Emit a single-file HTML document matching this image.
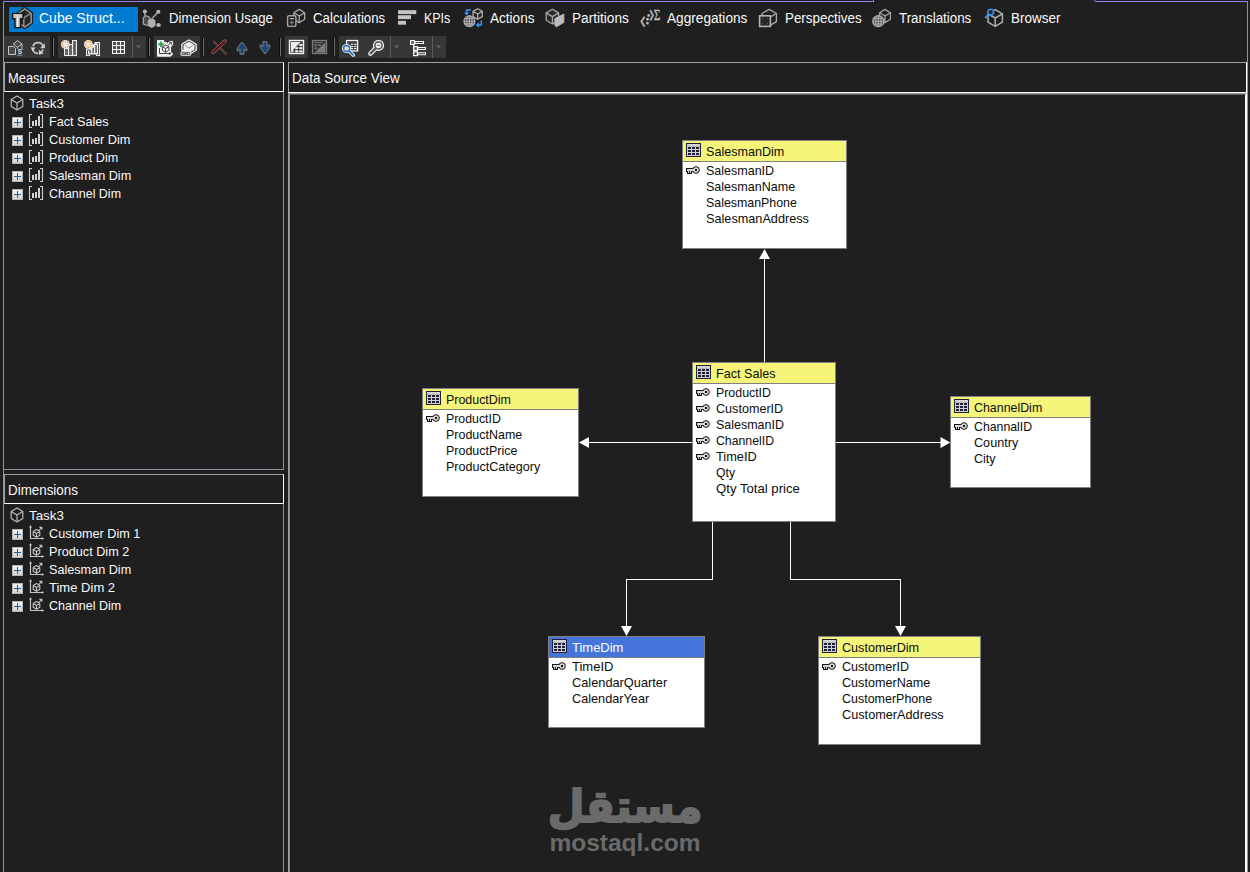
<!DOCTYPE html>
<html><head><meta charset="utf-8"><title>Cube Designer</title>
<style>
*{box-sizing:border-box;margin:0;padding:0}
html,body{width:1250px;height:872px;overflow:hidden;background:#1f1f1f}
body{position:relative;font-family:"Liberation Sans",sans-serif;font-size:13px;color:#fff}
.abs{position:absolute}
svg{display:block;overflow:visible}
.x{position:absolute;white-space:nowrap;line-height:16px;height:16px;transform-origin:0 50%}
.tbl{position:absolute;background:#fff;border:1px solid #808080}
.tbl .h{position:absolute;left:0;top:0;right:0;height:21px;border-bottom:1px solid #808080}
.g{position:absolute;top:36px;height:22px;background:#373737}
.sep{position:absolute;top:38px;width:2px;height:18px;border-right:1px solid #6e6e6e;border-left:1px dotted #000}
.dv{position:absolute;top:36px;width:1px;height:22px;background:#5c5c5c}
.pm{position:absolute;left:12px;width:11px;height:11px;border:1px solid #b4b4b4;background:linear-gradient(#f4f4f4,#d4d4d4)}
.pm:before{content:"";position:absolute;left:1px;top:4px;width:7px;height:1px;background:#1f5fa8}
.pm:after{content:"";position:absolute;left:4px;top:1px;width:1px;height:7px;background:#1f5fa8}
</style></head><body>

<div class="abs" style="left:3px;top:1px;width:871px;height:1px;background:#9282ee"></div>
<div class="abs" style="left:873px;top:0;width:1px;height:1px;background:#9282ee"></div><div class="abs" style="left:1094px;top:0;width:1px;height:1px;background:#9282ee"></div>
<div class="abs" style="left:1095px;top:1px;width:153px;height:1px;background:#9282ee"></div>
<div class="abs" style="left:3px;top:1px;width:1px;height:871px;background:#9282ee"></div>
<div class="abs" style="left:1247px;top:1px;width:1px;height:871px;background:#9282ee"></div>
<div class="abs" style="left:9px;top:7px;width:129px;height:25px;background:#007bd0;border-radius:1px"></div>

<svg class="abs" style="left:0;top:0" width="1250" height="34"><path d="M24.80 8.60 L31.30 13.30 L31.30 22.70 L24.80 27.40 L18.30 22.70 L18.30 13.30Z" fill="#262626" stroke="#14100e" stroke-width="3.2" stroke-linejoin="round" /><path d="M24.80 8.80 L31.20 13.40 L31.20 22.60 L24.80 27.20 L18.40 22.60 L18.40 13.40Z" fill="#262626" stroke="#969696" stroke-width="1.5" stroke-linejoin="round" /><path d="M18.6 13.6L23.8 17.8L31 13.4M23.8 17.8V27" fill="none" stroke="#868686" stroke-width="1.6"/><path d="M12.6 13.6H23V18.8H20.6V27.6H15V18.8H12.6Z" fill="#bebebe" stroke="#15100e" stroke-width="1.4" stroke-linejoin="round"/><path d="M17.6 15V26.4" stroke="#f0f0f0" stroke-width="1.1" fill="none"/><path d="M13.6 14.8H22" stroke="#dedede" stroke-width="1" fill="none"/><circle cx="144.9" cy="11.5" r="2.1" fill="#b4b4b4"/><circle cx="158.3" cy="11.8" r="2.1" fill="#b4b4b4"/><ellipse cx="158.5" cy="25" rx="2.4" ry="1.9" fill="#b4b4b4"/><path d="M144.9 12V16.5M157.3 12.8L152.3 18.2" stroke="#a8a8a8" stroke-width="1.4" fill="none"/><path d="M143.3 17.5L146.5 15.8L150 17.5V24L146.5 25.5L143.3 24Z" fill="#4a4a4a" stroke="#a8a8a8" stroke-width="1.2" stroke-linejoin="round"/><path d="M148.3 20.3L152 18.8L155 20.3V25.8L151.6 27.6L148.3 25.8Z" fill="#b0b0b0" stroke="#b8b8b8" stroke-width="0.8" stroke-linejoin="round"/><path d="M299.25 9.40 L304.65 12.70 L304.65 19.30 L299.25 22.60 L293.85 19.30 L293.85 12.70Z" fill="none" stroke="#a8a8a8" stroke-width="1.3" stroke-linejoin="round" /><path d="M293.85 12.70L299.25 16.00L304.65 12.70M299.25 16.00V22.60" fill="none" stroke="#a8a8a8" stroke-width="1.3" stroke-linejoin="round"/><rect x="287.6" y="15.8" width="8.3" height="10.6" rx="1.5" fill="#1f1f1f" stroke="#a8a8a8" stroke-width="1.4"/><path d="M289.8 18.6H293.8" stroke="#c8c8c8" stroke-width="1.2"/><path d="M289.6 22.6H294M291.8 20.6V24.8" stroke="#8a8a8a" stroke-width="1"/><rect x="398" y="10.2" width="18.3" height="3.9" fill="#c4c4c4"/><rect x="398" y="15.2" width="13" height="3.9" fill="#c4c4c4"/><rect x="398" y="20.8" width="8" height="3.9" fill="#c4c4c4"/><path d="M477.70 8.70 L482.30 11.35 L482.30 16.65 L477.70 19.30 L473.10 16.65 L473.10 11.35Z" fill="none" stroke="#b0b0b0" stroke-width="1.3" stroke-linejoin="round" /><path d="M473.10 11.35L477.70 14.00L482.30 11.35M477.70 14.00V19.30" fill="none" stroke="#b0b0b0" stroke-width="1.3" stroke-linejoin="round"/><circle cx="469.4" cy="21.2" r="5.4" fill="#4a4a4a" stroke="#b0b0b0" stroke-width="1.3"/><path d="M464.0 21.2H474.79999999999995M469.4 15.799999999999999V26.6M465.08 18.50H473.72M465.08 23.90H473.72" stroke="#b0b0b0" stroke-width="1.1" fill="none"/><ellipse cx="469.4" cy="21.2" rx="2.70" ry="5.4" fill="none" stroke="#b0b0b0" stroke-width="1"/><path d="M470.8 10H466.6V13.2" fill="none" stroke="#3a96f0" stroke-width="1.5"/><path d="M463.9 12.6H469.3L466.6 15.6Z" fill="#3a96f0"/><path d="M481.4 20.6V25H478.4" fill="none" stroke="#3a96f0" stroke-width="1.5"/><path d="M479 22.2V27.8L475.8 25Z" fill="#3a96f0"/><path d="M552.40 9.20 L558.60 12.90 L558.60 20.30 L552.40 24.00 L546.20 20.30 L546.20 12.90Z" fill="#2a2a2a" stroke="#a8a8a8" stroke-width="1.3" stroke-linejoin="round" /><path d="M546.20 12.90L552.40 16.60L558.60 12.90M552.40 16.60V24.00" fill="none" stroke="#a8a8a8" stroke-width="1.3" stroke-linejoin="round"/><path d="M554.8 18.6L563.9 14V22.4L556.6 26.8L554.8 25.6Z" fill="#bcbcbc" stroke="#bcbcbc" stroke-width="0.8" stroke-linejoin="round"/><path d="M644.6 16.6Q641.4 21.6 641.4 21.6Q641.4 21.6 644.6 26.6" fill="none" stroke="#a8a8a8" stroke-width="2"/><rect x="647.4" y="14.2" width="2.5" height="2.5" fill="#b8b8b8"/><rect x="646.2" y="18" width="2.5" height="2.5" fill="#b8b8b8"/><rect x="646.2" y="21.9" width="2.5" height="2.5" fill="#b8b8b8"/><path d="M650.2 10.2L653 15.3L650.2 20.4" fill="none" stroke="#a8a8a8" stroke-width="2"/><g opacity="0.99"><text x="653.8" y="19.7" font-family="Liberation Serif,serif" font-size="15.6" fill="#c4c4c4" stroke="#c4c4c4" stroke-width="0.35" textLength="6.6" lengthAdjust="spacingAndGlyphs">&#931;</text></g><path d="M769.20 9.40 L776.40 13.50 L776.40 21.70 L769.20 25.80 L762.00 21.70 L762.00 13.50Z" fill="none" stroke="#a8a8a8" stroke-width="1.4" stroke-linejoin="round" /><path d="M769.2 17.6L776.4 13.5" stroke="#a8a8a8" stroke-width="1.3"/><rect x="759.6" y="15.8" width="10.8" height="10.6" fill="#262626" stroke="#b4b4b4" stroke-width="1.6"/><path d="M762.2 18.4L767.8 23.8M767.8 18.4L762.2 23.8" stroke="#6a6a6a" stroke-width="1" stroke-dasharray="1.2 5.4"/><path d="M885.00 9.40 L890.40 12.70 L890.40 19.30 L885.00 22.60 L879.60 19.30 L879.60 12.70Z" fill="none" stroke="#a8a8a8" stroke-width="1.3" stroke-linejoin="round" /><path d="M879.60 12.70L885.00 16.00L890.40 12.70M885.00 16.00V22.60" fill="none" stroke="#a8a8a8" stroke-width="1.3" stroke-linejoin="round"/><circle cx="878.3" cy="21.2" r="5.5" fill="#4a4a4a" stroke="#b0b0b0" stroke-width="1.3"/><path d="M872.8 21.2H883.8M878.3 15.7V26.7M873.90 18.45H882.70M873.90 23.95H882.70" stroke="#b0b0b0" stroke-width="1.1" fill="none"/><ellipse cx="878.3" cy="21.2" rx="2.75" ry="5.5" fill="none" stroke="#b0b0b0" stroke-width="1"/><path d="M995.20 9.60 L1002.40 13.80 L1002.40 22.20 L995.20 26.40 L988.00 22.20 L988.00 13.80Z" fill="none" stroke="#b0b0b0" stroke-width="1.5" stroke-linejoin="round" /><path d="M988.00 13.80L995.20 18.00L1002.40 13.80M995.20 18.00V26.40" fill="none" stroke="#b0b0b0" stroke-width="1.5" stroke-linejoin="round"/><circle cx="990.7" cy="12.2" r="2.9" fill="#2a2a2a" stroke="#3a8ee8" stroke-width="1.5"/><path d="M988.8 14.4L985.6 17.4" stroke="#3a8ee8" stroke-width="2" stroke-linecap="round"/></svg>

<div class="g" style="left:4px;width:46px"></div>
<div class="sep" style="left:52px"></div>
<div class="g" style="left:58px;width:88px"></div><div class="dv" style="left:132px"></div>
<div class="sep" style="left:148px"></div>
<div class="g" style="left:154px;width:46px"></div>
<div class="sep" style="left:202px"></div>
<div class="sep" style="left:279px"></div>
<div class="g" style="left:285px;width:23px"></div>
<div class="sep" style="left:333px"></div>
<div class="g" style="left:339px;width:107px"></div><div class="dv" style="left:390px"></div><div class="dv" style="left:432px"></div>
<svg class="abs" style="left:0;top:0" width="1250" height="62"><path d="M8.5 46.5H13.5L15.5 48.5V54.5H8.5Z" fill="#4a4a4a" stroke="#c8c8c8" stroke-width="1"/><path d="M13.2 44L17.6 40.6L22 44L17.6 47.4Z" fill="#4a4a4a" stroke="#c8c8c8" stroke-width="1"/><path d="M22 44V50M17.6 47.4V49" stroke="#c8c8c8" stroke-width="1" fill="none"/><text x="17.8" y="53.6" font-family="Liberation Sans,sans-serif" font-size="6.4" font-weight="bold" fill="#e4e4e4">S</text><path d="M17 55.3H22" stroke="#a0a0a0" stroke-width="0.8"/><path d="M33 46.2A5.4 5.4 0 0 1 43.2 46.4" fill="none" stroke="#c4c4c4" stroke-width="1.8"/><path d="M44.8 43.2V48.2H40Z" fill="#d0d0d0"/><path d="M32.6 48.6A5.4 5.4 0 0 0 38.2 53.4" fill="none" stroke="#c4c4c4" stroke-width="1.8"/><path d="M30.6 47.2L35.6 47.6L32.6 51.4Z" fill="#d0d0d0"/><path d="M43.2 49.4L40.6 53.6" stroke="#c4c4c4" stroke-width="1.6"/><path d="M38.8 49.8L43.8 53.2L39 54.8Z" fill="#d0d0d0"/><rect x="64.5" y="48.5" width="4" height="7" fill="#686868" stroke="#f2f2f2"/><rect x="68.5" y="44.5" width="4" height="11" fill="#686868" stroke="#f2f2f2"/><rect x="72.5" y="40.5" width="4" height="15" fill="#686868" stroke="#f2f2f2"/><circle cx="65.4" cy="44.4" r="4.4" fill="#ececec"/><circle cx="68.40" cy="44.40" r="0.75" fill="#f09a20"/><circle cx="67.52" cy="46.52" r="0.75" fill="#f09a20"/><circle cx="65.40" cy="47.40" r="0.75" fill="#f09a20"/><circle cx="63.28" cy="46.52" r="0.75" fill="#f09a20"/><circle cx="62.40" cy="44.40" r="0.75" fill="#f09a20"/><circle cx="63.28" cy="42.28" r="0.75" fill="#f09a20"/><circle cx="65.40" cy="41.40" r="0.75" fill="#f09a20"/><circle cx="67.52" cy="42.28" r="0.75" fill="#f09a20"/><path d="M86 48.4H88.4V47H91.4V44.2H94.4V42H100V56H96V54.4H90V56H86Z" fill="#f2f2f2"/><path d="M89.2 50H87.5V54.7H89.2M96.8 43.5H98.6V54.7H96.8" fill="none" stroke="#3c3c3c" stroke-width="0.9"/><rect x="89.3" y="49.6" width="1.7" height="3.5" fill="#646464"/><rect x="92.3" y="47.6" width="1.7" height="5.5" fill="#646464"/><rect x="95.2" y="45" width="1.7" height="8.1" fill="#646464"/><circle cx="88.4" cy="44.4" r="4.4" fill="#ececec"/><circle cx="91.40" cy="44.40" r="0.75" fill="#f09a20"/><circle cx="90.52" cy="46.52" r="0.75" fill="#f09a20"/><circle cx="88.40" cy="47.40" r="0.75" fill="#f09a20"/><circle cx="86.28" cy="46.52" r="0.75" fill="#f09a20"/><circle cx="85.40" cy="44.40" r="0.75" fill="#f09a20"/><circle cx="86.28" cy="42.28" r="0.75" fill="#f09a20"/><circle cx="88.40" cy="41.40" r="0.75" fill="#f09a20"/><circle cx="90.52" cy="42.28" r="0.75" fill="#f09a20"/><rect x="112" y="41" width="13" height="13" fill="#f6f6f6"/><rect x="113" y="42" width="3" height="3" fill="#505050"/><rect x="117" y="42" width="3" height="3" fill="#505050"/><rect x="121" y="42" width="3" height="3" fill="#505050"/><rect x="113" y="46" width="3" height="3" fill="#505050"/><rect x="117" y="46" width="3" height="3" fill="#505050"/><rect x="121" y="46" width="3" height="3" fill="#505050"/><rect x="113" y="50" width="3" height="3" fill="#505050"/><rect x="117" y="50" width="3" height="3" fill="#505050"/><rect x="121" y="50" width="3" height="3" fill="#505050"/><path d="M135.7 45.2H141.3L138.5 48.8Z" fill="#5e5e5e"/><path d="M393.7 45.2H399.3L396.5 48.8Z" fill="#5e5e5e"/><path d="M435.8 45.2H441.40000000000003L438.6 48.8Z" fill="#5e5e5e"/><path d="M157.5 40.5H163.8V42.4H166.5L167.6 43.6L169.6 41.4H172.6V45L170.6 46.8V52L172.8 54L170.6 56.2H157.5V47.6H157.5Z" fill="#f4f4f4" stroke="#f4f4f4" stroke-width="1" stroke-linejoin="round"/><path d="M159.5 48V53.5H170" fill="none" stroke="#404040" stroke-width="1"/><path d="M169.2 51.8L171.4 53.5L169.2 55.2Z" fill="#404040"/><path d="M165.60 45.00 L168.80 46.80 L168.80 50.40 L165.60 52.20 L162.40 50.40 L162.40 46.80Z" fill="none" stroke="#404040" stroke-width="1" stroke-linejoin="round" /><path d="M162.40 46.80L165.60 48.60L168.80 46.80M165.60 48.60V52.20" fill="none" stroke="#404040" stroke-width="1" stroke-linejoin="round"/><path d="M168.2 45.2L171 42.4M169 42.2H171.4V44.6" fill="none" stroke="#404040" stroke-width="1"/><path d="M160 41.4H162V43.2H163.9V45.2H162V47H160V45.2H158.1V43.2H160Z" fill="#35a853"/><path d="M189 39.8L196.3 44V50.4L190.6 53.8H184L181.8 50.4V44Z" fill="#f2f2f2" stroke="#f2f2f2" stroke-width="1" stroke-linejoin="round"/><path d="M189 41.2L195 44.7V49.9L189.8 52.9M183 49.8V44.7L189 41.2" fill="none" stroke="#3c3c3c" stroke-width="1"/><path d="M185.2 45.4L189 48.2L192.8 45.4" fill="none" stroke="#8a8a8a" stroke-width="1"/><rect x="180.4" y="51" width="10.8" height="5" rx="2.5" fill="#f2f2f2"/><rect x="181.7" y="52.3" width="8.2" height="2.4" rx="1.2" fill="none" stroke="#3c3c3c" stroke-width="1"/><path d="M184.4 53.5H187.2" stroke="#f2f2f2" stroke-width="1.6"/><path d="M183.6 53.5H188" stroke="#3c3c3c" stroke-width="0.8"/><path d="M213.6 41.4L226.4 54.4" stroke="#6e6e6e" stroke-width="1.9"/><path d="M213.6 41.4L226.4 54.4" stroke="#5e0608" stroke-width="0.9"/><path d="M224.8 41.2L213.2 52.2" stroke="#747474" stroke-width="3.6" stroke-linecap="round"/><path d="M224.6 41.4L213.3 52.1" stroke="#6c0608" stroke-width="2.1" stroke-linecap="round"/><path d="M242 42L246.8 48.4V51.2L244 49V54.2H240V49L237.2 51.2V48.4Z" fill="#1b4679" stroke="#808080" stroke-width="1" stroke-linejoin="round"/><path d="M265 54L269.8 47.4V44.6L267 46.8V41.7H263V46.8L260.2 44.6V47.4Z" fill="#1b4679" stroke="#808080" stroke-width="1" stroke-linejoin="round"/><rect x="289.5" y="40.5" width="14" height="13" fill="#404040" stroke="#f6f6f6" stroke-width="1.4"/><path d="M291 42H300.5L291 52Z" fill="#ececec"/><rect x="299.3" y="44" width="3" height="1.9" fill="#f6f6f6"/><rect x="295.2" y="47.2" width="3" height="1.9" fill="#f6f6f6"/><rect x="299.3" y="47.2" width="3" height="1.9" fill="#f6f6f6"/><rect x="295.2" y="50.3" width="3" height="1.9" fill="#f6f6f6"/><rect x="299.3" y="50.3" width="3" height="1.9" fill="#f6f6f6"/><rect x="291.4" y="50.3" width="2" height="1.9" fill="#f6f6f6"/><rect x="312.5" y="40.5" width="14" height="13" fill="#303030" stroke="#7a7a7a" stroke-width="1.3"/><path d="M325.4 42.2V52.4H314.6Z" fill="#7c7c7c"/><path d="M314 42.6H322.6" stroke="#7a7a7a" stroke-width="0.9"/><rect x="314.2" y="44.2" width="3" height="1.9" fill="#727272"/><rect x="318.2" y="44.2" width="2.6" height="1.9" fill="#727272"/><rect x="314.2" y="47.3" width="3" height="1.9" fill="#727272"/><rect x="346.6" y="40.5" width="11" height="10.4" fill="#404040" stroke="#f6f6f6" stroke-width="1.3"/><rect x="351" y="43.8" width="2.2" height="1.1" fill="#f6f6f6"/><rect x="354.2" y="43.8" width="2.2" height="1.1" fill="#f6f6f6"/><rect x="351" y="46" width="2.2" height="1.1" fill="#f6f6f6"/><rect x="354.2" y="46" width="2.2" height="1.1" fill="#f6f6f6"/><rect x="351" y="48" width="2.2" height="1.1" fill="#f6f6f6"/><rect x="354.2" y="48" width="2.2" height="1.1" fill="#f6f6f6"/><path d="M349.6 51.4L353.2 55" stroke="#f4f0e8" stroke-width="3.6" stroke-linecap="round"/><circle cx="346.6" cy="48.5" r="4.6" fill="#f4f0e8"/><path d="M349.4 51.2L353 54.8" stroke="#1f6fd0" stroke-width="1.8" stroke-linecap="round"/><circle cx="346.6" cy="48.5" r="3" fill="#e2e4e2" stroke="#1f6fd0" stroke-width="1.3"/><path d="M375 49L370.4 53.6" stroke="#f4f0f0" stroke-width="4.6" stroke-linecap="round"/><circle cx="378.5" cy="45.4" r="5.6" fill="#f4f0f0"/><path d="M375 49L370.6 53.4" stroke="#606060" stroke-width="2.6" stroke-linecap="round"/><circle cx="378.5" cy="45.4" r="4.4" fill="#606060"/><circle cx="378.5" cy="45.4" r="2.7" fill="#f6f2f2"/><path d="M377 45.4H380" stroke="#505050" stroke-width="0.9"/><rect x="410" y="40" width="5" height="5" fill="#f6f6f6"/><rect x="411.2" y="41.2" width="2.6" height="2.6" fill="#505050"/><rect x="415" y="41" width="9" height="3" fill="#f6f6f6"/><rect x="415.6" y="42" width="7.4" height="1" fill="#484848"/><rect x="413" y="46" width="5" height="5" fill="#f6f6f6"/><rect x="414.2" y="47.2" width="2.6" height="2.6" fill="#505050"/><rect x="418" y="47" width="8" height="3" fill="#f6f6f6"/><rect x="418.6" y="48" width="6.4" height="1" fill="#484848"/><rect x="413" y="51.2" width="5" height="5" fill="#f6f6f6"/><rect x="414.2" y="52.400000000000006" width="2.6" height="2.6" fill="#505050"/><rect x="418" y="52.2" width="8" height="3" fill="#f6f6f6"/><rect x="418.6" y="53.2" width="6.4" height="1" fill="#484848"/><path d="M413.6 45V51.5" stroke="#f6f6f6" stroke-width="1.2"/></svg>

<div class="abs" style="left:4px;top:62px;width:280px;height:30px;border:1px solid;border-color:#a0a0a0 #fff #fff #a0a0a0"></div>
<div class="abs" style="left:4px;top:92px;width:280px;height:378px;border:1px solid #8a8ca0;border-top:none;border-left:none"></div>
<div class="abs" style="left:4px;top:474px;width:280px;height:30px;border:1px solid;border-color:#a0a0a0 #fff #fff #a0a0a0"></div>
<div class="abs" style="left:283px;top:504px;width:1px;height:368px;background:#8a8ca0"></div>
<div class="abs" style="left:288px;top:62px;width:959px;height:31px;border:1px solid;border-color:#a0a0a0 #fff #fff #a0a0a0"></div>
<div class="abs" style="left:288px;top:93px;width:959px;height:779px;border:1px solid;border-color:#9c9c9c #fff #fff #a0a0a0;border-bottom:none"></div>
<div class="abs" style="left:289px;top:94px;width:957px;height:778px;border:1px solid;border-color:#5c5c5c #fff #fff #858585;border-bottom:none"></div>

<svg class="abs" style="left:0;top:0" width="60" height="872"><path d="M17.00 96.00 L22.80 99.50 L22.80 106.50 L17.00 110.00 L11.20 106.50 L11.20 99.50Z" fill="none" stroke="#bcbcbc" stroke-width="1.2" stroke-linejoin="round" /><path d="M11.20 99.50L17.00 103.00L22.80 99.50M17.00 103.00V110.00" fill="none" stroke="#bcbcbc" stroke-width="1.2" stroke-linejoin="round"/><path d="M17.00 508.00 L22.80 511.50 L22.80 518.50 L17.00 522.00 L11.20 518.50 L11.20 511.50Z" fill="none" stroke="#bcbcbc" stroke-width="1.2" stroke-linejoin="round" /><path d="M11.20 511.50L17.00 515.00L22.80 511.50M17.00 515.00V522.00" fill="none" stroke="#bcbcbc" stroke-width="1.2" stroke-linejoin="round"/><path d="M32 114.5H29.5V127.5H32M40 114.5H42.5V127.5H40" fill="none" stroke="#d0d0d0" stroke-width="1.1"/><rect x="32" y="121" width="2" height="5" fill="#d4d4d4"/><rect x="35" y="120" width="2" height="6" fill="#d4d4d4"/><rect x="38" y="116" width="2" height="10" fill="#d4d4d4"/><path d="M30.5 527V538.5H42.5" fill="none" stroke="#c4c4c4" stroke-width="1.2"/><path d="M30.5 525L32 527.4H29Z M44.2 538.5L41.8 540V537Z" fill="#c4c4c4"/><path d="M39 530.4L41.2 528M39.4 527.4H41.8V529.8" fill="none" stroke="#c4c4c4" stroke-width="1.1"/><path d="M36.50 529.60 L39.80 531.50 L39.80 535.30 L36.50 537.20 L33.20 535.30 L33.20 531.50Z" fill="none" stroke="#c4c4c4" stroke-width="1.1" stroke-linejoin="round" /><path d="M33.20 531.50L36.50 533.40L39.80 531.50M36.50 533.40V537.20" fill="none" stroke="#c4c4c4" stroke-width="1.1" stroke-linejoin="round"/><path d="M32 132.5H29.5V145.5H32M40 132.5H42.5V145.5H40" fill="none" stroke="#d0d0d0" stroke-width="1.1"/><rect x="32" y="139" width="2" height="5" fill="#d4d4d4"/><rect x="35" y="138" width="2" height="6" fill="#d4d4d4"/><rect x="38" y="134" width="2" height="10" fill="#d4d4d4"/><path d="M30.5 545V556.5H42.5" fill="none" stroke="#c4c4c4" stroke-width="1.2"/><path d="M30.5 543L32 545.4H29Z M44.2 556.5L41.8 558V555Z" fill="#c4c4c4"/><path d="M39 548.4L41.2 546M39.4 545.4H41.8V547.8" fill="none" stroke="#c4c4c4" stroke-width="1.1"/><path d="M36.50 547.60 L39.80 549.50 L39.80 553.30 L36.50 555.20 L33.20 553.30 L33.20 549.50Z" fill="none" stroke="#c4c4c4" stroke-width="1.1" stroke-linejoin="round" /><path d="M33.20 549.50L36.50 551.40L39.80 549.50M36.50 551.40V555.20" fill="none" stroke="#c4c4c4" stroke-width="1.1" stroke-linejoin="round"/><path d="M32 150.5H29.5V163.5H32M40 150.5H42.5V163.5H40" fill="none" stroke="#d0d0d0" stroke-width="1.1"/><rect x="32" y="157" width="2" height="5" fill="#d4d4d4"/><rect x="35" y="156" width="2" height="6" fill="#d4d4d4"/><rect x="38" y="152" width="2" height="10" fill="#d4d4d4"/><path d="M30.5 563V574.5H42.5" fill="none" stroke="#c4c4c4" stroke-width="1.2"/><path d="M30.5 561L32 563.4H29Z M44.2 574.5L41.8 576V573Z" fill="#c4c4c4"/><path d="M39 566.4L41.2 564M39.4 563.4H41.8V565.8" fill="none" stroke="#c4c4c4" stroke-width="1.1"/><path d="M36.50 565.60 L39.80 567.50 L39.80 571.30 L36.50 573.20 L33.20 571.30 L33.20 567.50Z" fill="none" stroke="#c4c4c4" stroke-width="1.1" stroke-linejoin="round" /><path d="M33.20 567.50L36.50 569.40L39.80 567.50M36.50 569.40V573.20" fill="none" stroke="#c4c4c4" stroke-width="1.1" stroke-linejoin="round"/><path d="M32 168.5H29.5V181.5H32M40 168.5H42.5V181.5H40" fill="none" stroke="#d0d0d0" stroke-width="1.1"/><rect x="32" y="175" width="2" height="5" fill="#d4d4d4"/><rect x="35" y="174" width="2" height="6" fill="#d4d4d4"/><rect x="38" y="170" width="2" height="10" fill="#d4d4d4"/><path d="M30.5 581V592.5H42.5" fill="none" stroke="#c4c4c4" stroke-width="1.2"/><path d="M30.5 579L32 581.4H29Z M44.2 592.5L41.8 594V591Z" fill="#c4c4c4"/><path d="M39 584.4L41.2 582M39.4 581.4H41.8V583.8" fill="none" stroke="#c4c4c4" stroke-width="1.1"/><path d="M36.50 583.60 L39.80 585.50 L39.80 589.30 L36.50 591.20 L33.20 589.30 L33.20 585.50Z" fill="none" stroke="#c4c4c4" stroke-width="1.1" stroke-linejoin="round" /><path d="M33.20 585.50L36.50 587.40L39.80 585.50M36.50 587.40V591.20" fill="none" stroke="#c4c4c4" stroke-width="1.1" stroke-linejoin="round"/><path d="M32 186.5H29.5V199.5H32M40 186.5H42.5V199.5H40" fill="none" stroke="#d0d0d0" stroke-width="1.1"/><rect x="32" y="193" width="2" height="5" fill="#d4d4d4"/><rect x="35" y="192" width="2" height="6" fill="#d4d4d4"/><rect x="38" y="188" width="2" height="10" fill="#d4d4d4"/><path d="M30.5 599V610.5H42.5" fill="none" stroke="#c4c4c4" stroke-width="1.2"/><path d="M30.5 597L32 599.4H29Z M44.2 610.5L41.8 612V609Z" fill="#c4c4c4"/><path d="M39 602.4L41.2 600M39.4 599.4H41.8V601.8" fill="none" stroke="#c4c4c4" stroke-width="1.1"/><path d="M36.50 601.60 L39.80 603.50 L39.80 607.30 L36.50 609.20 L33.20 607.30 L33.20 603.50Z" fill="none" stroke="#c4c4c4" stroke-width="1.1" stroke-linejoin="round" /><path d="M33.20 603.50L36.50 605.40L39.80 603.50M36.50 605.40V609.20" fill="none" stroke="#c4c4c4" stroke-width="1.1" stroke-linejoin="round"/></svg><div class="pm" style="top:117px"></div><div class="pm" style="top:529px"></div><div class="pm" style="top:135px"></div><div class="pm" style="top:547px"></div><div class="pm" style="top:153px"></div><div class="pm" style="top:565px"></div><div class="pm" style="top:171px"></div><div class="pm" style="top:583px"></div><div class="pm" style="top:189px"></div><div class="pm" style="top:601px"></div>
<div class="tbl" style="left:682px;top:140px;width:165px;height:109px"><div class="h" style="background:#f5f57a"></div><svg class="abs" style="left:0;top:0" width="22" height="20"><rect x="3.5" y="2.5" width="14" height="13" fill="#d2d2d2" stroke="#20203a" stroke-width="1"/><path d="M4 5.5H17" stroke="#b8b8b8" stroke-width="1"/><rect x="5" y="6" width="3" height="2" fill="#20203a"/><rect x="9" y="6" width="3" height="2" fill="#20203a"/><rect x="13" y="6" width="3" height="2" fill="#20203a"/><rect x="5" y="9" width="3" height="2" fill="#20203a"/><rect x="9" y="9" width="3" height="2" fill="#20203a"/><rect x="13" y="9" width="3" height="2" fill="#20203a"/><rect x="5" y="12" width="3" height="2" fill="#20203a"/><rect x="9" y="12" width="3" height="2" fill="#20203a"/><rect x="13" y="12" width="3" height="2" fill="#20203a"/></svg>
<div class="abs" style="left:3px;top:24px"><svg width="16" height="11"><g shape-rendering="crispEdges"><rect x="0" y="3" width="7.5" height="4" fill="#161616"/><rect x="1" y="6" width="5" height="3" fill="#161616"/></g><circle cx="10" cy="5" r="3.35" fill="#d4d6d4" stroke="#161616" stroke-width="1"/><rect x="9" y="4" width="2" height="2" fill="#101010"/><g shape-rendering="crispEdges"><rect x="1" y="4" width="7" height="2" fill="#d6d6d6"/><rect x="2" y="6" width="1" height="2" fill="#d6d6d6"/><rect x="4" y="6" width="1" height="2" fill="#d6d6d6"/></g></svg></div>
</div>
<div class="tbl" style="left:692px;top:362px;width:144px;height:160px"><div class="h" style="background:#f5f57a"></div><svg class="abs" style="left:0;top:0" width="22" height="20"><rect x="3.5" y="2.5" width="14" height="13" fill="#d2d2d2" stroke="#20203a" stroke-width="1"/><path d="M4 5.5H17" stroke="#b8b8b8" stroke-width="1"/><rect x="5" y="6" width="3" height="2" fill="#20203a"/><rect x="9" y="6" width="3" height="2" fill="#20203a"/><rect x="13" y="6" width="3" height="2" fill="#20203a"/><rect x="5" y="9" width="3" height="2" fill="#20203a"/><rect x="9" y="9" width="3" height="2" fill="#20203a"/><rect x="13" y="9" width="3" height="2" fill="#20203a"/><rect x="5" y="12" width="3" height="2" fill="#20203a"/><rect x="9" y="12" width="3" height="2" fill="#20203a"/><rect x="13" y="12" width="3" height="2" fill="#20203a"/></svg>
<div class="abs" style="left:3px;top:24px"><svg width="16" height="11"><g shape-rendering="crispEdges"><rect x="0" y="3" width="7.5" height="4" fill="#161616"/><rect x="1" y="6" width="5" height="3" fill="#161616"/></g><circle cx="10" cy="5" r="3.35" fill="#d4d6d4" stroke="#161616" stroke-width="1"/><rect x="9" y="4" width="2" height="2" fill="#101010"/><g shape-rendering="crispEdges"><rect x="1" y="4" width="7" height="2" fill="#d6d6d6"/><rect x="2" y="6" width="1" height="2" fill="#d6d6d6"/><rect x="4" y="6" width="1" height="2" fill="#d6d6d6"/></g></svg></div>
<div class="abs" style="left:3px;top:40px"><svg width="16" height="11"><g shape-rendering="crispEdges"><rect x="0" y="3" width="7.5" height="4" fill="#161616"/><rect x="1" y="6" width="5" height="3" fill="#161616"/></g><circle cx="10" cy="5" r="3.35" fill="#d4d6d4" stroke="#161616" stroke-width="1"/><rect x="9" y="4" width="2" height="2" fill="#101010"/><g shape-rendering="crispEdges"><rect x="1" y="4" width="7" height="2" fill="#d6d6d6"/><rect x="2" y="6" width="1" height="2" fill="#d6d6d6"/><rect x="4" y="6" width="1" height="2" fill="#d6d6d6"/></g></svg></div>
<div class="abs" style="left:3px;top:56px"><svg width="16" height="11"><g shape-rendering="crispEdges"><rect x="0" y="3" width="7.5" height="4" fill="#161616"/><rect x="1" y="6" width="5" height="3" fill="#161616"/></g><circle cx="10" cy="5" r="3.35" fill="#d4d6d4" stroke="#161616" stroke-width="1"/><rect x="9" y="4" width="2" height="2" fill="#101010"/><g shape-rendering="crispEdges"><rect x="1" y="4" width="7" height="2" fill="#d6d6d6"/><rect x="2" y="6" width="1" height="2" fill="#d6d6d6"/><rect x="4" y="6" width="1" height="2" fill="#d6d6d6"/></g></svg></div>
<div class="abs" style="left:3px;top:72px"><svg width="16" height="11"><g shape-rendering="crispEdges"><rect x="0" y="3" width="7.5" height="4" fill="#161616"/><rect x="1" y="6" width="5" height="3" fill="#161616"/></g><circle cx="10" cy="5" r="3.35" fill="#d4d6d4" stroke="#161616" stroke-width="1"/><rect x="9" y="4" width="2" height="2" fill="#101010"/><g shape-rendering="crispEdges"><rect x="1" y="4" width="7" height="2" fill="#d6d6d6"/><rect x="2" y="6" width="1" height="2" fill="#d6d6d6"/><rect x="4" y="6" width="1" height="2" fill="#d6d6d6"/></g></svg></div>
<div class="abs" style="left:3px;top:88px"><svg width="16" height="11"><g shape-rendering="crispEdges"><rect x="0" y="3" width="7.5" height="4" fill="#161616"/><rect x="1" y="6" width="5" height="3" fill="#161616"/></g><circle cx="10" cy="5" r="3.35" fill="#d4d6d4" stroke="#161616" stroke-width="1"/><rect x="9" y="4" width="2" height="2" fill="#101010"/><g shape-rendering="crispEdges"><rect x="1" y="4" width="7" height="2" fill="#d6d6d6"/><rect x="2" y="6" width="1" height="2" fill="#d6d6d6"/><rect x="4" y="6" width="1" height="2" fill="#d6d6d6"/></g></svg></div>
</div>
<div class="tbl" style="left:422px;top:388px;width:157px;height:109px"><div class="h" style="background:#f5f57a"></div><svg class="abs" style="left:0;top:0" width="22" height="20"><rect x="3.5" y="2.5" width="14" height="13" fill="#d2d2d2" stroke="#20203a" stroke-width="1"/><path d="M4 5.5H17" stroke="#b8b8b8" stroke-width="1"/><rect x="5" y="6" width="3" height="2" fill="#20203a"/><rect x="9" y="6" width="3" height="2" fill="#20203a"/><rect x="13" y="6" width="3" height="2" fill="#20203a"/><rect x="5" y="9" width="3" height="2" fill="#20203a"/><rect x="9" y="9" width="3" height="2" fill="#20203a"/><rect x="13" y="9" width="3" height="2" fill="#20203a"/><rect x="5" y="12" width="3" height="2" fill="#20203a"/><rect x="9" y="12" width="3" height="2" fill="#20203a"/><rect x="13" y="12" width="3" height="2" fill="#20203a"/></svg>
<div class="abs" style="left:3px;top:24px"><svg width="16" height="11"><g shape-rendering="crispEdges"><rect x="0" y="3" width="7.5" height="4" fill="#161616"/><rect x="1" y="6" width="5" height="3" fill="#161616"/></g><circle cx="10" cy="5" r="3.35" fill="#d4d6d4" stroke="#161616" stroke-width="1"/><rect x="9" y="4" width="2" height="2" fill="#101010"/><g shape-rendering="crispEdges"><rect x="1" y="4" width="7" height="2" fill="#d6d6d6"/><rect x="2" y="6" width="1" height="2" fill="#d6d6d6"/><rect x="4" y="6" width="1" height="2" fill="#d6d6d6"/></g></svg></div>
</div>
<div class="tbl" style="left:950px;top:396px;width:141px;height:92px"><div class="h" style="background:#f5f57a"></div><svg class="abs" style="left:0;top:0" width="22" height="20"><rect x="3.5" y="2.5" width="14" height="13" fill="#d2d2d2" stroke="#20203a" stroke-width="1"/><path d="M4 5.5H17" stroke="#b8b8b8" stroke-width="1"/><rect x="5" y="6" width="3" height="2" fill="#20203a"/><rect x="9" y="6" width="3" height="2" fill="#20203a"/><rect x="13" y="6" width="3" height="2" fill="#20203a"/><rect x="5" y="9" width="3" height="2" fill="#20203a"/><rect x="9" y="9" width="3" height="2" fill="#20203a"/><rect x="13" y="9" width="3" height="2" fill="#20203a"/><rect x="5" y="12" width="3" height="2" fill="#20203a"/><rect x="9" y="12" width="3" height="2" fill="#20203a"/><rect x="13" y="12" width="3" height="2" fill="#20203a"/></svg>
<div class="abs" style="left:3px;top:24px"><svg width="16" height="11"><g shape-rendering="crispEdges"><rect x="0" y="3" width="7.5" height="4" fill="#161616"/><rect x="1" y="6" width="5" height="3" fill="#161616"/></g><circle cx="10" cy="5" r="3.35" fill="#d4d6d4" stroke="#161616" stroke-width="1"/><rect x="9" y="4" width="2" height="2" fill="#101010"/><g shape-rendering="crispEdges"><rect x="1" y="4" width="7" height="2" fill="#d6d6d6"/><rect x="2" y="6" width="1" height="2" fill="#d6d6d6"/><rect x="4" y="6" width="1" height="2" fill="#d6d6d6"/></g></svg></div>
</div>
<div class="tbl" style="left:548px;top:636px;width:157px;height:92px"><div class="h" style="background:#4475db"></div><svg class="abs" style="left:0;top:0" width="22" height="20"><rect x="3.5" y="2.5" width="14" height="13" fill="#d2d2d2" stroke="#20203a" stroke-width="1"/><path d="M4 5.5H17" stroke="#b8b8b8" stroke-width="1"/><rect x="5" y="6" width="3" height="2" fill="#20203a"/><rect x="9" y="6" width="3" height="2" fill="#20203a"/><rect x="13" y="6" width="3" height="2" fill="#20203a"/><rect x="5" y="9" width="3" height="2" fill="#20203a"/><rect x="9" y="9" width="3" height="2" fill="#20203a"/><rect x="13" y="9" width="3" height="2" fill="#20203a"/><rect x="5" y="12" width="3" height="2" fill="#20203a"/><rect x="9" y="12" width="3" height="2" fill="#20203a"/><rect x="13" y="12" width="3" height="2" fill="#20203a"/></svg>
<div class="abs" style="left:3px;top:24px"><svg width="16" height="11"><g shape-rendering="crispEdges"><rect x="0" y="3" width="7.5" height="4" fill="#161616"/><rect x="1" y="6" width="5" height="3" fill="#161616"/></g><circle cx="10" cy="5" r="3.35" fill="#d4d6d4" stroke="#161616" stroke-width="1"/><rect x="9" y="4" width="2" height="2" fill="#101010"/><g shape-rendering="crispEdges"><rect x="1" y="4" width="7" height="2" fill="#d6d6d6"/><rect x="2" y="6" width="1" height="2" fill="#d6d6d6"/><rect x="4" y="6" width="1" height="2" fill="#d6d6d6"/></g></svg></div>
</div>
<div class="tbl" style="left:818px;top:636px;width:163px;height:109px"><div class="h" style="background:#f5f57a"></div><svg class="abs" style="left:0;top:0" width="22" height="20"><rect x="3.5" y="2.5" width="14" height="13" fill="#d2d2d2" stroke="#20203a" stroke-width="1"/><path d="M4 5.5H17" stroke="#b8b8b8" stroke-width="1"/><rect x="5" y="6" width="3" height="2" fill="#20203a"/><rect x="9" y="6" width="3" height="2" fill="#20203a"/><rect x="13" y="6" width="3" height="2" fill="#20203a"/><rect x="5" y="9" width="3" height="2" fill="#20203a"/><rect x="9" y="9" width="3" height="2" fill="#20203a"/><rect x="13" y="9" width="3" height="2" fill="#20203a"/><rect x="5" y="12" width="3" height="2" fill="#20203a"/><rect x="9" y="12" width="3" height="2" fill="#20203a"/><rect x="13" y="12" width="3" height="2" fill="#20203a"/></svg>
<div class="abs" style="left:3px;top:24px"><svg width="16" height="11"><g shape-rendering="crispEdges"><rect x="0" y="3" width="7.5" height="4" fill="#161616"/><rect x="1" y="6" width="5" height="3" fill="#161616"/></g><circle cx="10" cy="5" r="3.35" fill="#d4d6d4" stroke="#161616" stroke-width="1"/><rect x="9" y="4" width="2" height="2" fill="#101010"/><g shape-rendering="crispEdges"><rect x="1" y="4" width="7" height="2" fill="#d6d6d6"/><rect x="2" y="6" width="1" height="2" fill="#d6d6d6"/><rect x="4" y="6" width="1" height="2" fill="#d6d6d6"/></g></svg></div>
</div>

<svg class="abs" style="left:0;top:0" width="1250" height="872" shape-rendering="crispEdges">
<g stroke="#fff" stroke-width="1" fill="none">
<path d="M764.5 362V255"/><path d="M692 442.5H585"/><path d="M836 442.5H944"/>
<path d="M712.5 522V579.5H626.5V630"/><path d="M790.5 522V579.5H900.5V630"/>
</g>
<g fill="#fff" shape-rendering="geometricPrecision">
<path d="M764.5 249l5.5 10h-11z"/><path d="M579 442.5l10-5.5v11z"/><path d="M950.3 442.5l-9.8-5.5v11z"/>
<path d="M626.5 636l-5.5-10h11z"/><path d="M900.5 636l-5.5-10h11z"/>
</g></svg>

<div class="x" style="left:39.0px;top:9.75px;font-size:14px;color:#ffffff;transform:scaleX(1.0001)">Cube Struct...</div>
<div class="x" style="left:169.4px;top:9.75px;font-size:14px;color:#fafafa;transform:scaleX(0.9403)">Dimension Usage</div>
<div class="x" style="left:312.5px;top:9.75px;font-size:14px;color:#fafafa;transform:scaleX(0.9467)">Calculations</div>
<div class="x" style="left:423.7px;top:9.75px;font-size:14px;color:#fafafa;transform:scaleX(0.8892)">KPIs</div>
<div class="x" style="left:489.7px;top:9.75px;font-size:14px;color:#fafafa;transform:scaleX(0.9690)">Actions</div>
<div class="x" style="left:571.8px;top:9.75px;font-size:14px;color:#fafafa;transform:scaleX(0.9733)">Partitions</div>
<div class="x" style="left:666.5px;top:9.75px;font-size:14px;color:#fafafa;transform:scaleX(0.9744)">Aggregations</div>
<div class="x" style="left:784.8px;top:9.75px;font-size:14px;color:#fafafa;transform:scaleX(0.9556)">Perspectives</div>
<div class="x" style="left:899.0px;top:9.75px;font-size:14px;color:#fafafa;transform:scaleX(0.9545)">Translations</div>
<div class="x" style="left:1010.6px;top:9.75px;font-size:14px;color:#fafafa;transform:scaleX(0.9618)">Browser</div>
<div class="x" style="left:7.9px;top:70.15px;font-size:14px;color:#fafafa;transform:scaleX(0.9224)">Measures</div>
<div class="x" style="left:7.8px;top:482.15px;font-size:14px;color:#fafafa;transform:scaleX(0.9557)">Dimensions</div>
<div class="x" style="left:291.8px;top:70.15px;font-size:14px;color:#fafafa;transform:scaleX(0.9632)">Data Source View</div>
<div class="x" style="left:29.1px;top:95.63px;font-size:12.6px;color:#fafafa;transform:scaleX(1.0606)">Task3</div>
<div class="x" style="left:49.0px;top:113.63px;font-size:12.6px;color:#fafafa;transform:scaleX(1.0017)">Fact Sales</div>
<div class="x" style="left:49.0px;top:131.63px;font-size:12.6px;color:#fafafa;transform:scaleX(1.0114)">Customer Dim</div>
<div class="x" style="left:49.0px;top:149.63px;font-size:12.6px;color:#fafafa;transform:scaleX(0.9986)">Product Dim</div>
<div class="x" style="left:49.0px;top:167.63px;font-size:12.6px;color:#fafafa;transform:scaleX(1.0038)">Salesman Dim</div>
<div class="x" style="left:49.0px;top:185.63px;font-size:12.6px;color:#fafafa;transform:scaleX(0.9891)">Channel Dim</div>
<div class="x" style="left:29.1px;top:507.63px;font-size:12.6px;color:#fafafa;transform:scaleX(1.0606)">Task3</div>
<div class="x" style="left:49.0px;top:525.63px;font-size:12.6px;color:#fafafa;transform:scaleX(1.0035)">Customer Dim 1</div>
<div class="x" style="left:49.0px;top:543.63px;font-size:12.6px;color:#fafafa;transform:scaleX(1.0063)">Product Dim 2</div>
<div class="x" style="left:49.0px;top:561.63px;font-size:12.6px;color:#fafafa;transform:scaleX(1.0038)">Salesman Dim</div>
<div class="x" style="left:49.0px;top:579.63px;font-size:12.6px;color:#fafafa;transform:scaleX(1.0343)">Time Dim 2</div>
<div class="x" style="left:49.0px;top:597.63px;font-size:12.6px;color:#fafafa;transform:scaleX(0.9904)">Channel Dim</div>
<div class="x" style="left:705.9px;top:143.63px;font-size:12.6px;color:#0c0c0c;transform:scaleX(0.9988)">SalesmanDim</div>
<div class="x" style="left:705.9px;top:162.63px;font-size:12.6px;color:#0c0c0c;transform:scaleX(0.9926)">SalesmanID</div>
<div class="x" style="left:705.9px;top:178.63px;font-size:12.6px;color:#0c0c0c;transform:scaleX(0.9954)">SalesmanName</div>
<div class="x" style="left:705.9px;top:194.63px;font-size:12.6px;color:#0c0c0c;transform:scaleX(0.9835)">SalesmanPhone</div>
<div class="x" style="left:705.9px;top:210.63px;font-size:12.6px;color:#0c0c0c;transform:scaleX(1.0068)">SalesmanAddress</div>
<div class="x" style="left:715.9px;top:365.63px;font-size:12.6px;color:#0c0c0c;transform:scaleX(1.0017)">Fact Sales</div>
<div class="x" style="left:715.9px;top:384.63px;font-size:12.6px;color:#0c0c0c;transform:scaleX(0.9821)">ProductID</div>
<div class="x" style="left:715.9px;top:400.63px;font-size:12.6px;color:#0c0c0c;transform:scaleX(1.0002)">CustomerID</div>
<div class="x" style="left:715.9px;top:416.63px;font-size:12.6px;color:#0c0c0c;transform:scaleX(0.9897)">SalesmanID</div>
<div class="x" style="left:715.9px;top:432.63px;font-size:12.6px;color:#0c0c0c;transform:scaleX(0.9745)">ChannelID</div>
<div class="x" style="left:715.9px;top:448.63px;font-size:12.6px;color:#0c0c0c;transform:scaleX(1.0168)">TimeID</div>
<div class="x" style="left:715.9px;top:464.63px;font-size:12.6px;color:#0c0c0c;transform:scaleX(0.9697)">Qty</div>
<div class="x" style="left:715.9px;top:480.63px;font-size:12.6px;color:#0c0c0c;transform:scaleX(1.0453)">Qty Total price</div>
<div class="x" style="left:445.9px;top:391.63px;font-size:12.6px;color:#0c0c0c;transform:scaleX(0.9864)">ProductDim</div>
<div class="x" style="left:445.9px;top:410.63px;font-size:12.6px;color:#0c0c0c;transform:scaleX(0.9786)">ProductID</div>
<div class="x" style="left:445.9px;top:426.63px;font-size:12.6px;color:#0c0c0c;transform:scaleX(0.9896)">ProductName</div>
<div class="x" style="left:445.9px;top:442.63px;font-size:12.6px;color:#0c0c0c;transform:scaleX(0.9902)">ProductPrice</div>
<div class="x" style="left:445.9px;top:458.63px;font-size:12.6px;color:#0c0c0c;transform:scaleX(0.9967)">ProductCategory</div>
<div class="x" style="left:973.9px;top:399.63px;font-size:12.6px;color:#0c0c0c;transform:scaleX(0.9842)">ChannelDim</div>
<div class="x" style="left:973.9px;top:418.63px;font-size:12.6px;color:#0c0c0c;transform:scaleX(0.9762)">ChannalID</div>
<div class="x" style="left:973.9px;top:434.63px;font-size:12.6px;color:#0c0c0c;transform:scaleX(1.0021)">Country</div>
<div class="x" style="left:973.9px;top:450.63px;font-size:12.6px;color:#0c0c0c;transform:scaleX(0.9952)">City</div>
<div class="x" style="left:571.9px;top:639.63px;font-size:12.6px;color:#ffffff;transform:scaleX(1.0299)">TimeDim</div>
<div class="x" style="left:571.9px;top:658.63px;font-size:12.6px;color:#0c0c0c;transform:scaleX(1.0343)">TimeID</div>
<div class="x" style="left:571.9px;top:674.63px;font-size:12.6px;color:#0c0c0c;transform:scaleX(1.0148)">CalendarQuarter</div>
<div class="x" style="left:571.9px;top:690.63px;font-size:12.6px;color:#0c0c0c;transform:scaleX(1.0083)">CalendarYear</div>
<div class="x" style="left:841.9px;top:639.63px;font-size:12.6px;color:#0c0c0c;transform:scaleX(1.0015)">CustomerDim</div>
<div class="x" style="left:841.9px;top:658.63px;font-size:12.6px;color:#0c0c0c;transform:scaleX(0.9987)">CustomerID</div>
<div class="x" style="left:841.9px;top:674.63px;font-size:12.6px;color:#0c0c0c;transform:scaleX(1.0013)">CustomerName</div>
<div class="x" style="left:841.9px;top:690.63px;font-size:12.6px;color:#0c0c0c;transform:scaleX(0.9910)">CustomerPhone</div>
<div class="x" style="left:841.9px;top:706.63px;font-size:12.6px;color:#0c0c0c;transform:scaleX(1.0090)">CustomerAddress</div>

<div class="abs" style="left:525px;top:777px;width:200px;text-align:center;font-family:'DejaVu Sans',sans-serif;font-weight:bold;font-size:45px;line-height:60px;color:#6a6a6a;-webkit-text-stroke:2px #6a6a6a;transform:scale(0.94,1.0)" dir="rtl">مستقل</div>
<div class="abs" style="left:525px;top:831px;width:200px;text-align:center;font-weight:bold;font-size:24.5px;line-height:24px;color:#6a6a6a;transform:scaleX(1.0)">mostaql.com</div>

</body></html>
